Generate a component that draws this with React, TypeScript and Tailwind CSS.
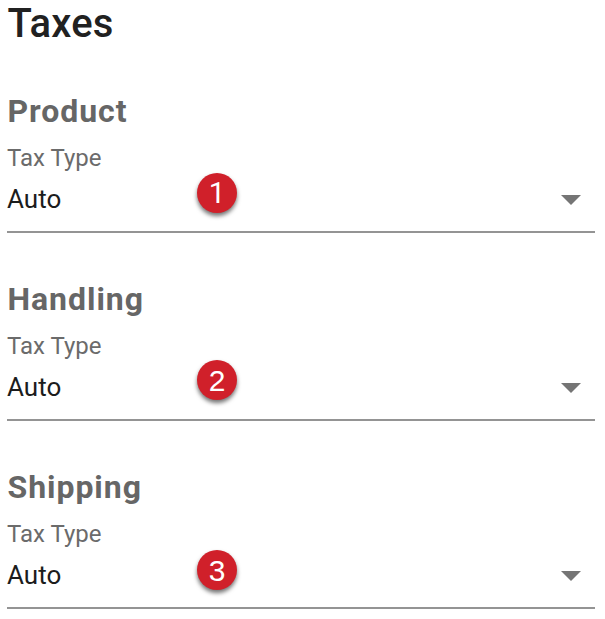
import React from "react";

const sections = [
  {
    name: "Product",
    value: "Auto",
    step: 1,
    badge: "top-[32px] font-[Roboto,sans-serif] text-[29.5px]",
  },
  {
    name: "Handling",
    value: "Auto",
    step: 2,
    badge: "top-[31px] font-['Liberation_Sans',sans-serif] text-[30px]",
  },
  {
    name: "Shipping",
    value: "Auto",
    step: 3,
    badge: "top-[33px] font-['Liberation_Sans',sans-serif] text-[30px]",
  },
];

const TaxSection = ({ name, value, step, badge }: (typeof sections)[number]) => (
  <section className="h-[188px]">
    <h2 className="pl-[0.5px] text-[32px] leading-[40px] font-bold tracking-[0.95px] text-[#666666]">
      {name}
    </h2>
    <div className="relative mt-[10px] h-[92px] border-b-2 border-[#949494] pt-[3px]">
      <div className="text-[24px] leading-[28px] text-[#6b6b6b]">
        Tax Type
      </div>
      <div className="mt-[10px] flex items-center justify-between pr-[14px]">
        <span className="text-[26px] leading-[34px] text-[#1c1c1c]">{value}</span>
        <svg width="20" height="10" viewBox="0 0 20 10" className="mt-[1px]">
          <path d="M0 0h20L10 10z" fill="#757575" />
        </svg>
      </div>
      <div
        className={`absolute left-[190px] ${badge} flex size-[40px] items-center justify-center rounded-full bg-[#d0202a] pt-[2px] leading-none text-white shadow-[0px_3px_4px_rgba(0,0,0,0.55)]`}
      >
        {step}
      </div>
    </div>
  </section>
);

export default function App() {
  return (
    <main className="h-[619px] overflow-hidden bg-white pr-[10px] pl-[7px] font-[Roboto,sans-serif]">
      <h1 className="h-[91px] pt-px pl-[0.5px] text-[40px] leading-[46px] font-medium tracking-[0.2px] text-[#212121]">
        Taxes
      </h1>
      {sections.map((section) => (
        <TaxSection key={section.name} {...section} />
      ))}
    </main>
  );
}
